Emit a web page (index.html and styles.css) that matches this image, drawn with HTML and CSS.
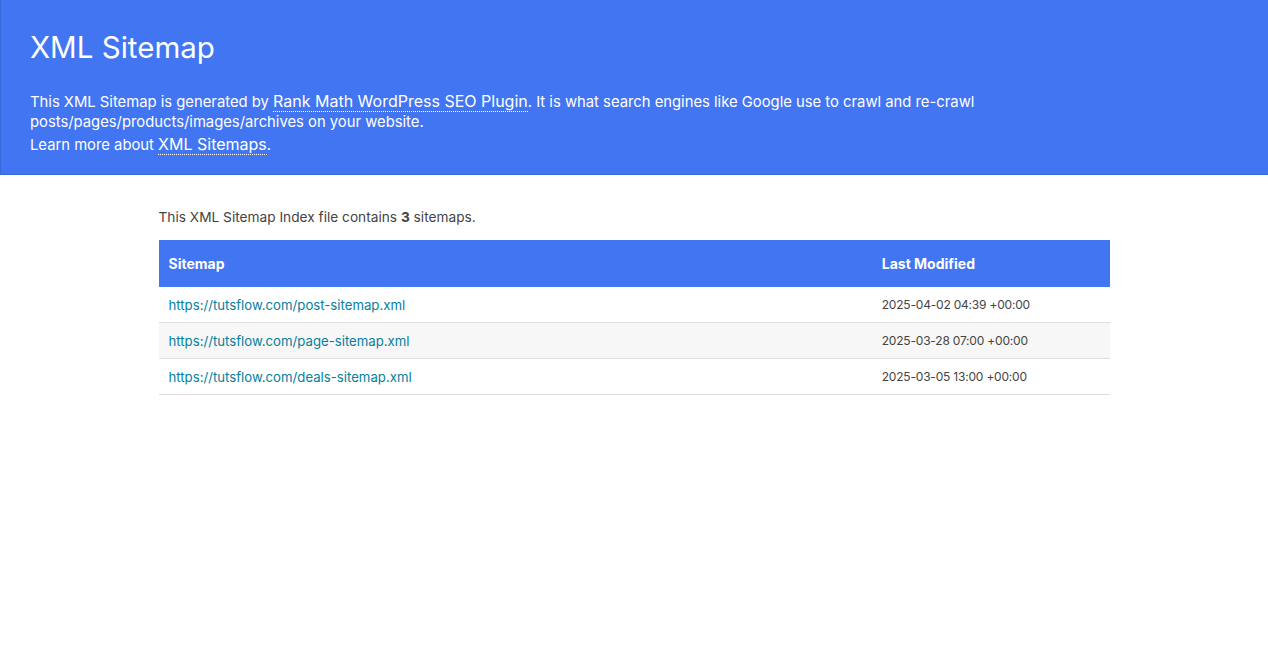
FILE: index.html
```html
<!DOCTYPE html>
<html lang="en">
<head>
    <meta charset="UTF-8">
    <meta name="viewport" content="width=device-width, initial-scale=1.0">
    <title>XML Sitemap</title>
    <link rel="stylesheet" href="styles.css">
</head>
<body>
    <div id="description">
        <h1>XML Sitemap</h1>
        <p>This XML Sitemap is generated by <a href="#">Rank Math WordPress SEO Plugin</a>. It is what search engines like Google use to crawl and re-crawl posts/pages/products/images/archives on your website.</p>
        <p class="learn">Learn more about <a href="#">XML Sitemaps</a>.</p>
    </div>
    <div id="content">
        <p class="expl">This XML Sitemap Index file contains <strong>3</strong> sitemaps.</p>
        <table>
            <thead>
                <tr>
                    <th class="col-loc">Sitemap</th>
                    <th>Last Modified</th>
                </tr>
            </thead>
            <tbody>
                <tr>
                    <td><a href="#">https://tutsflow.com/post-sitemap.xml</a></td>
                    <td class="date">2025-04-02 04:39 +00:00</td>
                </tr>
                <tr>
                    <td><a href="#">https://tutsflow.com/page-sitemap.xml</a></td>
                    <td class="date">2025-03-28 07:00 +00:00</td>
                </tr>
                <tr>
                    <td><a href="#">https://tutsflow.com/deals-sitemap.xml</a></td>
                    <td class="date">2025-03-05 13:00 +00:00</td>
                </tr>
            </tbody>
        </table>
    </div>
</body>
</html>
```

FILE: styles.css
```css
body {
    font-family: Inter, "Noto Sans", sans-serif;
    color: #444;
    margin: 0;
    font-size: 13px;
}
#description {
    background-color: #4275f2;
    color: #fff;
    padding: 29px 29px 19px;
    border-left: 1px solid #3a69db;
    border-bottom: 1px solid #3a69db;
}
#description h1 {
    font-size: 29.5px;
    font-weight: 400;
    margin: 0 0 27px;
    line-height: 36px;
}
#description p {
    font-size: 14.8px;
    line-height: 20px;
    margin: 0 0 3px;
    max-width: 960px;
}
#description p.learn {
    margin: 0;
}
#description a {
    color: #fff;
    font-size: 16px;
    line-height: 16px;
    text-decoration: none;
    border-bottom: 1px dotted #fff;
}
#content {
    width: 75%;
    margin: 0 auto;
    padding: 24px 0;
}
.expl {
    margin: 9px 0 14px;
    font-size: 13.7px;
    line-height: 18px;
}
table {
    width: 100%;
    border-collapse: collapse;
    font-size: 13.2px;
}
th {
    background-color: #4275f2;
    color: #fff;
    text-align: left;
    font-size: 14px;
    font-weight: 700;
    height: 47px;
    padding: 0 10px;
}
th.col-loc {
    width: 75%;
}
td {
    height: 35px;
    padding: 0 10px;
    border-bottom: 1px solid #ddd;
}
td.date {
    font-size: 12px;
    letter-spacing: -0.2px;
}
tbody tr:nth-child(even) td {
    background-color: #f7f7f7;
}
td a {
    color: #05809e;
    text-decoration: none;
}
```
